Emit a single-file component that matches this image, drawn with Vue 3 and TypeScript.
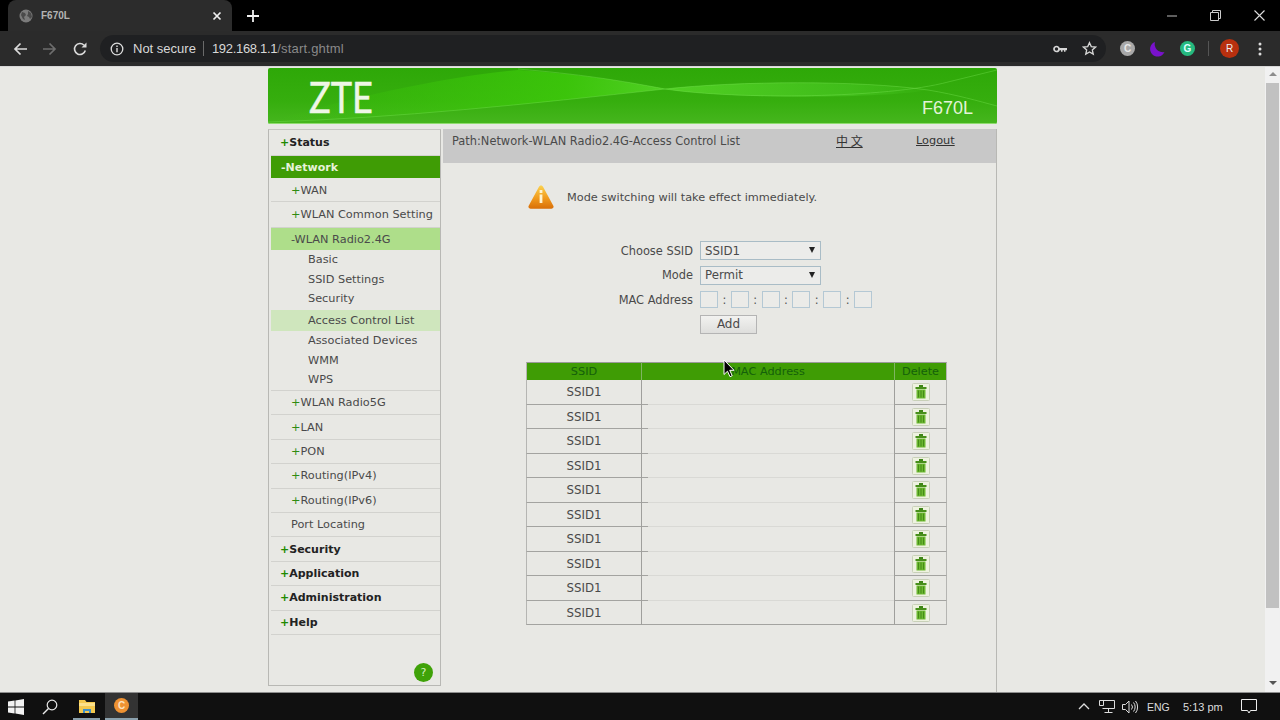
<script setup lang="ts">
type MenuRow = { text: string; cls: string };
const menu: MenuRow[] = [
  { text: "Status", cls: "top plus first" },
  { text: "-Network", cls: "top active" },
  { text: "WAN", cls: "sec plus wan" },
  { text: "WLAN Common Setting", cls: "sec plus common" },
  { text: "-WLAN Radio2.4G", cls: "sec open" },
  { text: "Basic", cls: "leaf" },
  { text: "SSID Settings", cls: "leaf" },
  { text: "Security", cls: "leaf" },
  { text: "Access Control List", cls: "leaf cur" },
  { text: "Associated Devices", cls: "leaf tight" },
  { text: "WMM", cls: "leaf tight" },
  { text: "WPS", cls: "leaf last" },
  { text: "WLAN Radio5G", cls: "sec plus" },
  { text: "LAN", cls: "sec plus" },
  { text: "PON", cls: "sec plus" },
  { text: "Routing(IPv4)", cls: "sec plus" },
  { text: "Routing(IPv6)", cls: "sec plus" },
  { text: "Port Locating", cls: "sec" },
  { text: "Security", cls: "top plus" },
  { text: "Application", cls: "top plus" },
  { text: "Administration", cls: "top plus" },
  { text: "Help", cls: "top plus" },
];
const rows: number[] = [1, 2, 3, 4, 5, 6, 7, 8, 9, 10];
const macs: number[] = [0, 1, 2, 3, 4, 5];
</script>

<template>
  <div class="screen">
    <div class="tabstrip">
      <div class="tab">
        <svg class="globe" viewBox="0 0 14 14" width="14" height="14"><circle cx="7" cy="7" r="6.500" fill="#7b7b7b"/><path d="M3 3l3 1 1 2-2 2 1 3-2-1-2-4zM9 2l3 2 1 4-2 2-1-2-2-1 1-2z" fill="#4a4a4a"/></svg>
        <span class="tabtitle">F670L</span>
        <svg class="tabx" viewBox="0 0 10 10" width="10" height="10"><path d="M1.500 1.500l7 7M8.500 1.500l-7 7" stroke="#eee" stroke-width="1.700"/></svg>
      </div>
      <svg class="newtab" viewBox="0 0 12 12" width="12" height="12"><path d="M6 0v12M0 6h12" stroke="#f0f0f0" stroke-width="1.800"/></svg>
      <div class="winbtns">
        <svg viewBox="0 0 10 10" width="10" height="10"><path d="M0 5h10" stroke="#bbb"/></svg>
        <svg viewBox="0 0 11 11" width="11" height="11"><path d="M.5 2.500h8v8h-8zM2.500 2.500v-2h8v8h-2" fill="none" stroke="#ccc"/></svg>
        <svg viewBox="0 0 11 11" width="11" height="11"><path d="M.5.5l10 10M10.500.5l-10 10" stroke="#ddd" stroke-width="1.100"/></svg>
      </div>
    </div>

    <div class="toolbar">
      <svg class="nav n1" viewBox="0 0 14 14" width="14" height="14"><path d="M14 7H2M7.500 1.500L2 7l5.500 5.500" fill="none" stroke="#dcdcdc" stroke-width="1.700"/></svg>
      <svg class="nav n2" viewBox="0 0 14 14" width="14" height="14"><path d="M0 7h12M6.500 1.500L12 7l-5.500 5.500" fill="none" stroke="#6e6e6e" stroke-width="1.700"/></svg>
      <svg class="nav n3" viewBox="0 0 14 14" width="14" height="14"><path d="M12.300 8.500A5.500 5.500 0 1 1 11 3.200" fill="none" stroke="#dcdcdc" stroke-width="1.600"/><path d="M13.500 .5v5h-5z" fill="#dcdcdc"/></svg>
      <div class="omnibox">
        <svg viewBox="0 0 14 14" width="14" height="14"><circle cx="7" cy="7" r="5.800" fill="none" stroke="#ddd" stroke-width="1.300"/><path d="M7 6v4.200M7 3.600v1.300" stroke="#ddd" stroke-width="1.400"/></svg>
        <span class="ns">Not secure</span>
        <span class="sep"></span>
        <span class="host">192.168.1.1</span><span class="path">/start.ghtml</span>
        <svg class="key" viewBox="0 0 14 10" width="14" height="10"><circle cx="3.500" cy="5" r="2.500" fill="none" stroke="#d6d6d6" stroke-width="1.700"/><path d="M6 4h8v2.300h-1.500v1.500H11V6.300H9.500v1.500H8V6.300H6z" fill="#d6d6d6"/></svg>
        <svg class="star" viewBox="0 0 16 16" width="15" height="15"><path d="M8 1.800l1.900 4.200 4.500.5-3.400 3 1 4.500L8 11.700 4 14l1-4.500-3.400-3 4.500-.5z" fill="none" stroke="#d6d6d6" stroke-width="1.400"/></svg>
      </div>
      <div class="ext e1">C</div>
      <svg class="moon" viewBox="0 0 16 16" width="16" height="16"><path d="M6 1a7.500 7.500 0 1 0 9.500 10A8 8 0 0 1 6 1z" fill="#7a12cc"/></svg>
      <div class="ext e3">G</div>
      <span class="tsep"></span>
      <div class="avatar">R</div>
      <svg class="dots" viewBox="0 0 4 14" width="4" height="14"><circle cx="2" cy="2" r="1.500" fill="#ddd"/><circle cx="2" cy="7" r="1.500" fill="#ddd"/><circle cx="2" cy="12" r="1.500" fill="#ddd"/></svg>
    </div>

    <div class="viewport">
      <div class="page">
        <div class="container">
          <header class="banner">
            <svg class="waves" viewBox="0 0 729 56" preserveAspectRatio="none">
              <defs>
                <linearGradient id="bg" x1="0" y1="0" x2="0" y2="1"><stop offset="0" stop-color="#2ea808"/><stop offset=".6" stop-color="#36ae0e"/><stop offset="1" stop-color="#46b61e"/></linearGradient>
                <linearGradient id="w1" x1="0" y1="0" x2="1" y2="0"><stop offset="0" stop-color="#3cc80a" stop-opacity="0"/><stop offset=".75" stop-color="#3ecc0a" stop-opacity=".75"/><stop offset="1" stop-color="#58d82a" stop-opacity=".8"/></linearGradient>
                <linearGradient id="w2" x1="0" y1="0" x2="1" y2="0"><stop offset="0" stop-color="#58d82a" stop-opacity=".8"/><stop offset=".7" stop-color="#46c420" stop-opacity=".7"/><stop offset="1" stop-color="#46c420" stop-opacity=".1"/></linearGradient>
              </defs>
              <rect width="729" height="56" fill="url(#bg)"/>
              <path d="M0 54C130 50 260 36 397 21 C350 12 310 6 250 2 C180 8 80 30 0 54z" fill="url(#w1)"/>
              <path d="M397 21C470 13 590 12 660 22 C620 30 470 32 397 21z" fill="url(#w2)"/>
              <path d="M0 54C130 50 260 36 397 21 C470 13 590 12 660 22 C690 27 710 33 729 38" fill="none" stroke="#7fe85a" stroke-width=".8" opacity=".45"/>
              <path d="M250 1C310 6 350 12 397 21 C470 32 620 30 680 14 L729 2" fill="none" stroke="#7fe85a" stroke-width=".8" opacity=".45"/>
              <path d="M0 55.500H729" stroke="#8fdc6e" stroke-width="1"/>
            </svg>
            <span class="logo">ZTE</span>
            <span class="model">F670L</span>
          </header>

          <div class="columns">
            <aside class="sidebar">
              <div v-for="(m, i) in menu" :key="i" class="row" :class="m.cls">
                <span class="mark" v-if="m.cls.includes('plus')">+</span>{{ m.text }}
              </div>
              <div class="helpwrap"><span class="help">?</span></div>
            </aside>

            <main class="main">
              <div class="pathbar">
                <span class="crumb">Path:Network-WLAN Radio2.4G-Access Control List</span>
                <a class="lang">中 文</a>
                <a class="logout">Logout</a>
              </div>

              <div class="notice">
                <svg viewBox="0 0 26 26" width="26" height="26">
                  <defs><linearGradient id="tri" x1="0" y1="0" x2="0" y2="1"><stop offset="0" stop-color="#fbd24f"/><stop offset=".55" stop-color="#f09a1e"/><stop offset="1" stop-color="#d96f08"/></linearGradient></defs>
                  <path d="M13 1.500c1 0 1.700.6 2.300 1.700l10 18.500c.8 1.800-.2 3-2 3H2.700c-1.800 0-2.800-1.200-2-3l10-18.500c.6-1.100 1.300-1.700 2.300-1.700z" fill="url(#tri)"/>
                  <rect x="11.600" y="6" width="2.800" height="3" fill="#fff3d0"/>
                  <rect x="11.600" y="10.500" width="2.800" height="8.500" fill="#fff3d0"/>
                </svg>
                <span>Mode switching will take effect immediately.</span>
              </div>

              <form class="form" @submit.prevent>
                <div class="frow">
                  <label>Choose SSID</label>
                  <div class="fake-select">SSID1<i></i></div>
                </div>
                <div class="frow">
                  <label>Mode</label>
                  <div class="fake-select">Permit<i></i></div>
                </div>
                <div class="frow">
                  <label>MAC Address</label>
                  <div class="macs">
                    <template v-for="n in macs" :key="n">
                      <span class="macbox"></span>
                      <span class="colon" v-if="n < 5">:</span>
                    </template>
                  </div>
                </div>
                <div class="frow">
                  <label></label>
                  <div class="addbtn">Add</div>
                </div>
              </form>

              <table class="grid">
                <thead>
                  <tr><th class="c1">SSID</th><th class="c2">MAC Address</th><th class="c3">Delete</th></tr>
                </thead>
                <tbody>
                  <tr v-for="r in rows" :key="r">
                    <td class="c1">SSID1</td>
                    <td class="c2"></td>
                    <td class="c3">
                      <svg viewBox="0 0 18 18" width="18" height="18">
                        <rect x=".5" y=".5" width="17" height="17" rx="1" fill="#eef2e0" stroke="#c8d0b8"/>
                        <rect x="7" y="2" width="4" height="2" fill="#3f8518"/>
                        <rect x="3.500" y="4" width="11" height="2" fill="#478f1a"/>
                        <rect x="4.500" y="6.500" width="9" height="9" fill="#6cb830"/>
                        <path d="M6.500 7.500v7M9 7.500v7M11.500 7.500v7" stroke="#458c18" stroke-width="1"/>
                      </svg>
                    </td>
                  </tr>
                </tbody>
              </table>
            </main>
          </div>
        </div>
      </div>
      <div class="scrollbar">
        <i class="up"></i>
        <div class="thumb"></div>
        <i class="down"></i>
      </div>
      <svg class="cursor" viewBox="0 0 12 19" width="12" height="19"><path d="M1 1v14.500l3.500-3.300 2.500 5.500 2.200-1-2.500-5.400H11z" fill="#000" stroke="#fff" stroke-width="1"/></svg>
    </div>

    <footer class="taskbar">
      <svg class="t-win" viewBox="0 0 16 16" width="16" height="16"><path d="M0 2.400L6.600 1.500v6.100H0zM7.400 1.400L16 0v7.600H7.400zM0 8.400h6.600v6.100L0 13.600zM7.400 8.400H16V16l-8.600-1.400z" fill="#f2f2f2"/></svg>
      <svg class="t-search" viewBox="0 0 16 16" width="16" height="16"><circle cx="10" cy="6" r="4.800" fill="none" stroke="#e8e8e8" stroke-width="1.200"/><path d="M6.500 9.500L1 15" stroke="#e8e8e8" stroke-width="1.500"/></svg>
      <div class="t-app t-folder">
        <svg viewBox="0 0 16 14" width="16" height="14"><path d="M0 1h6l1.500 2H16v11H0z" fill="#f3c84e"/><rect y="4" width="16" height="3" fill="#fbe08a"/><path d="M4 14v-4h8v4h-2v-2H6v2z" fill="#3d8fc8"/></svg>
      </div>
      <div class="t-app t-active"><span class="chrome-o">C</span></div>
      <div class="tray">
        <svg viewBox="0 0 12 7" width="12" height="7"><path d="M1 6l5-5 5 5" fill="none" stroke="#ddd" stroke-width="1.300"/></svg>
        <svg class="i-net" viewBox="0 0 16 15" width="16" height="15"><path d="M3.500 1.500h12v8h-12M9.500 9.500V13M5.500 13.500h8" fill="none" stroke="#ddd"/><path d="M.5 1.500h4v5h-4z" fill="none" stroke="#ddd"/></svg>
        <svg class="i-vol" viewBox="0 0 16 14" width="16" height="14"><path d="M.5 4.500h3L7 1v12L3.500 9.500h-3z" fill="none" stroke="#ddd"/><path d="M9.500 4.500a4 4 0 0 1 0 5M11.500 2.500a7 7 0 0 1 0 9M13.500 1a9.500 9.500 0 0 1 0 12" fill="none" stroke="#ddd"/></svg>
        <span class="eng">ENG</span>
        <span class="clock">5:13 pm</span>
        <svg class="notif" viewBox="0 0 16 15" width="16" height="15"><path d="M.5.5h15v11H9.500L8 14l-1.500-2.500H.5z" fill="none" stroke="#eee"/></svg>
      </div>
    </footer>
  </div>
</template>

<style scoped>
.screen { width: 1280px; height: 720px; display: flex; flex-direction: column; overflow: hidden; font-family: "DejaVu Sans", sans-serif; position: relative; }

.tabstrip { height: 31px; background: #000; display: flex; align-items: center; flex: none; }
.tab { width: 224px; height: 31px; margin-left: 8px; background: #2c2c2c; border-radius: 8px 8px 0 0; display: flex; align-items: center; padding-left: 11px; box-sizing: border-box; }
.tabtitle { font: 700 10px "Liberation Sans", sans-serif; color: #b4b4b4; margin-left: 8px; flex: 1; }
.tabx { margin-right: 10px; }
.newtab { margin-left: 15px; }
.winbtns { margin-left: auto; display: flex; align-items: center; gap: 33px; margin-right: 15px; }

.toolbar { height: 36px; background: #2b2b2b; border-bottom: 1px solid #d8d8d8; box-sizing: border-box; display: flex; align-items: center; flex: none; }
.nav { flex: none; }
.n1 { margin-left: 13px; }
.n2 { margin-left: 16px; }
.n3 { margin-left: 16px; }
.omnibox { margin-left: 13px; width: 1006px; height: 27px; box-sizing: border-box; background: #1f2022; border-radius: 14px; display: flex; align-items: center; padding-left: 10px; padding-right: 9px; }
.ns { font: 13px "Liberation Sans", sans-serif; color: #d8d8d8; margin-left: 9px; }
.sep { width: 1px; height: 15px; background: #6a6a6a; margin: 0 8px 0 7px; }
.host { font: 13px "Liberation Sans", sans-serif; color: #d8d8d8; letter-spacing: -.3px; }
.path { font: 13px "Liberation Sans", sans-serif; color: #8a8a8a; letter-spacing: .2px; }
.key { margin-left: auto; }
.star { margin-left: 15px; }
.ext { width: 15px; height: 15px; border-radius: 50%; display: flex; align-items: center; justify-content: center; font: 700 10px "Liberation Sans", sans-serif; flex: none; }
.e1 { background: #a8a8a8; color: #e8e8e8; margin-left: 14px; }
.moon { margin-left: 14px; }
.e3 { background: #25b97f; color: #dff; margin-left: 15px; }
.tsep { width: 1px; height: 15px; background: #555; margin-left: 13px; }
.avatar { width: 19px; height: 19px; border-radius: 50%; background: #b8300f; color: #eee; font: 10px "Liberation Sans", sans-serif; display: flex; align-items: center; justify-content: center; margin-left: 11px; flex: none; }
.dots { margin-left: 19px; }

.viewport { flex: 1; min-height: 0; display: flex; position: relative; background: #e8e8e4; }
.page { flex: 1; min-width: 0; }
.container { width: 729px; margin-left: 268px; margin-top: 1px; }
.banner { height: 56px; position: relative; border-radius: 2px; overflow: hidden; }
.waves { position: absolute; inset: 0; width: 100%; height: 100%; }
.logo { position: absolute; left: 41px; top: 6px; color: #eef6e6; font: 400 43px/46px Lato, sans-serif; transform: scaleX(.84); transform-origin: left; -webkit-text-stroke: .5px #eef6e6; }
.model { position: absolute; right: 24px; bottom: 6px; color: #e3f3d8; font: 18px/20px "Liberation Sans", sans-serif; }

.columns { display: flex; margin-top: 5px; height: 563px; }
.sidebar { width: 173px; height: 557px; box-sizing: border-box; border: 1px solid #b8b8b4; border-top-color: #c6c6c2; padding: 1px 0 0 2px; flex: none; position: relative; }
.row { height: 24.4px; box-sizing: border-box; display: flex; align-items: center; font-size: 11.3px; color: #4a4a4a; white-space: pre; border-bottom: 1px solid #d2d2ce; }
.row.top { padding-left: 9px; font-weight: 700; font-size: 11px; color: #222; }
.row.first { height: 25px; padding-bottom: 2px; }
.row.top .mark { color: #1f8a00; font-weight: 700; }
.row.active { background: #3f9c05; color: #e6f2da; height: 22px; padding-left: 10px; border-bottom: 0; }
.row.sec { padding-left: 20px; }
.row.wan { height: 24px; padding-top: 1px; }
.row.common { height: 26px; padding-bottom: 1px; }
.sec .mark { color: #2e8b12; }
.row.open { background: #aede8a; height: 22px; border-bottom: 0; }
.row.leaf { padding-left: 37px; height: 19.8px; border-bottom: 0; padding-bottom: 1px; }
.row.cur { background: #cfe6bd; height: 21px; margin-top: .6px; padding-bottom: 0; }
.row.tight { height: 19.5px; padding-bottom: 0; }
.row.last { height: 21px; border-bottom: 1px solid #d2d2ce; padding-bottom: 1px; }
.helpwrap { position: absolute; right: 7px; bottom: 3px; }
.help { display: flex; width: 19px; height: 19px; border-radius: 50%; background: #3fa208; color: #d6efc0; font-size: 11px; align-items: center; justify-content: center; }

.main { flex: 1; margin-left: 2px; border-right: 1px solid #b8b8b4; min-width: 0; }
.pathbar { height: 34px; background: #c8c8c8; display: flex; align-items: flex-start; padding-top: 5px; box-sizing: border-box; font-size: 11.4px; color: #4a4a4a; line-height: 14px; }
.crumb { margin-left: 9px; width: 384px; }
.lang { font-family: "Noto Sans CJK SC", sans-serif; color: #333; text-decoration: underline; width: 80px; font-size: 12px; }
.logout { color: #333; text-decoration: underline; font-size: 11.3px; }

.notice { display: flex; align-items: center; margin-left: 85px; margin-top: 21px; height: 26px; gap: 13px; font-size: 11.3px; color: #4a4a4a; }

.form { margin-top: 30px; display: flex; flex-direction: column; gap: 3.500px; height: 97px; }
.frow { display: flex; align-items: center; height: 21px; font-size: 11.4px; color: #4a4a4a; }
.frow label { width: 250px; text-align: right; margin-right: 7px; flex: none; }
.fake-select { width: 121px; height: 19px; box-sizing: border-box; border: 1px solid #a9bcc6; background: #ececea; position: relative; padding-left: 4px; display: flex; align-items: center; font-size: 11.8px; }
.fake-select i { position: absolute; right: 5px; top: 5px; border-left: 3.500px solid transparent; border-right: 3.500px solid transparent; border-top: 6px solid #222; }
.macs { display: flex; align-items: center; }
.macbox { width: 18px; height: 17px; box-sizing: border-box; border: 1px solid #b4c8d4; background: #ebebe8; }
.colon { width: 12.800px; text-align: center; color: #555; }
.addbtn { width: 57px; height: 19px; box-sizing: border-box; border: 1px solid #b4b4b4; background: linear-gradient(#f2f2f0, #dededc); display: flex; align-items: center; justify-content: center; font-size: 12px; }

.grid { margin: 25px 0 0 83px; width: 421px; border-collapse: separate; border-spacing: 0; table-layout: fixed; font-size: 11.800px; color: #4a4a4a; }
.grid th { height: 18px; box-sizing: border-box; padding: 0; background: #3f9c05; color: #14600a; font-weight: 400; font-size: 11.300px; border-top: 1px solid #9a9a9a; line-height: 14px; }
.grid th + th { border-left: 1px solid #7fb562; }
.grid td { height: 24.5px; padding: 1px 0 0; text-align: center; border-bottom: 1px solid #a3a3a0; box-sizing: border-box; }
.grid td + td { border-left: 1px solid #9f9f9c; }
.grid td.c2 { border-bottom: 0; background: linear-gradient(#a3a3a0, #a3a3a0) left bottom / 6px 1px no-repeat, linear-gradient(#d9d9d5, #d9d9d5) left bottom / 100% 1px no-repeat; }
.grid tr:last-child td.c2 { background: linear-gradient(#a3a3a0, #a3a3a0) left bottom / 100% 1px no-repeat; }
.grid td svg { display: block; margin: 0 auto; }
.grid .c1 { width: 115px; box-sizing: border-box; border-left: 1px solid #b5b5b2; }
.grid .c3 { width: 53px; box-sizing: border-box; border-right: 1px solid #b5b5b2; }

.scrollbar { width: 15px; flex: none; background: #f1f1f1; display: flex; flex-direction: column; align-items: center; }
.up, .down { display: block; width: 0; height: 0; border-left: 4px solid transparent; border-right: 4px solid transparent; }
.up { border-bottom: 4px solid #8d8d8d; margin-top: 5px; }
.down { border-top: 4px solid #555; margin-bottom: 7px; }
.thumb { width: 13px; height: 525px; background: #c1c1c1; margin-top: 7px; margin-bottom: auto; }
.cursor { position: absolute; left: 723px; top: 292px; }

.taskbar { height: 28px; background: #101010; border-top: 1px solid #8e8e8e; box-sizing: border-box; display: flex; align-items: center; flex: none; position: relative; }
.t-win { margin-left: 8px; }
.t-search { margin-left: 18px; }
.t-app { height: 27px; display: flex; align-items: center; justify-content: center; box-sizing: border-box; flex: none; }
.t-folder { width: 27px; margin-left: 15px; border-bottom: 2px solid #8aa0ac; }
.t-active { width: 33px; margin-left: 5px; background: #333; border-bottom: 2px solid #8aa0ac; }
.chrome-o { width: 15px; height: 15px; border-radius: 50%; background: #ef9232; color: #fde4c2; font: 700 10px/15px "Liberation Sans", sans-serif; text-align: center; }
.tray { margin-left: auto; display: flex; align-items: center; font: 11px "Liberation Sans", sans-serif; color: #dcdcdc; margin-right: 23px; }
.i-net { margin-left: 9px; }
.i-vol { margin-left: 7px; }
.eng { margin-left: 9px; width: 22px; font-size: 10.500px; }
.clock { margin-left: 14px; width: 39px; white-space: nowrap; }
.notif { margin-left: 19px; }
</style>

<style>
html, body { margin: 0; padding: 0; background: #000; }
</style>
